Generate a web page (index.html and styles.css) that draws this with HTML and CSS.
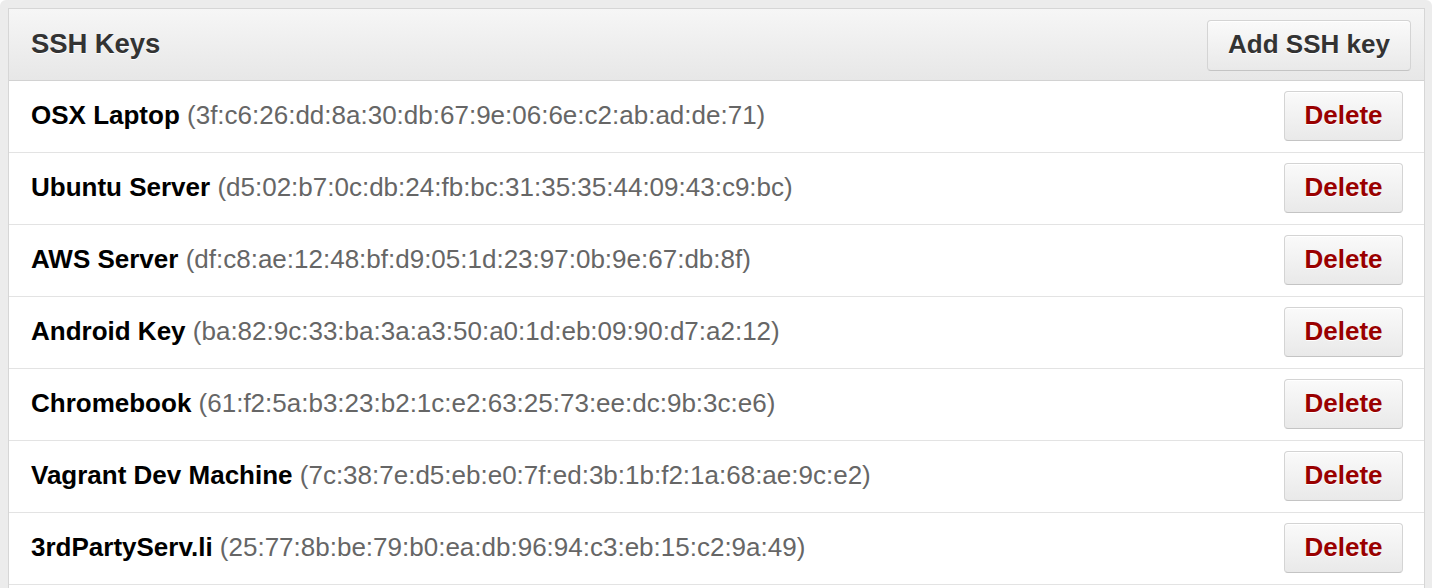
FILE: index.html
```html
<!DOCTYPE html>
<html>
<head>
<meta charset="utf-8">
<link rel="stylesheet" href="styles.css">
</head>
<body>
<div class="frame">
  <div class="box">
    <div class="box-header">
      <h3 class="title">SSH Keys</h3>
      <button class="btn btn-add">Add SSH key</button>
    </div>
    <ul class="keys">
      <li class="key"><span class="key-info"><strong class="key-name">OSX Laptop</strong> <span class="fp">(3f:c6:26:dd:8a:30:db:67:9e:06:6e:c2:ab:ad:de:71)</span></span><button class="btn btn-danger">Delete</button></li>
      <li class="key"><span class="key-info"><strong class="key-name">Ubuntu Server</strong> <span class="fp">(d5:02:b7:0c:db:24:fb:bc:31:35:35:44:09:43:c9:bc)</span></span><button class="btn btn-danger">Delete</button></li>
      <li class="key"><span class="key-info"><strong class="key-name">AWS Server</strong> <span class="fp">(df:c8:ae:12:48:bf:d9:05:1d:23:97:0b:9e:67:db:8f)</span></span><button class="btn btn-danger">Delete</button></li>
      <li class="key"><span class="key-info"><strong class="key-name">Android Key</strong> <span class="fp">(ba:82:9c:33:ba:3a:a3:50:a0:1d:eb:09:90:d7:a2:12)</span></span><button class="btn btn-danger">Delete</button></li>
      <li class="key"><span class="key-info"><strong class="key-name">Chromebook</strong> <span class="fp">(61:f2:5a:b3:23:b2:1c:e2:63:25:73:ee:dc:9b:3c:e6)</span></span><button class="btn btn-danger">Delete</button></li>
      <li class="key"><span class="key-info"><strong class="key-name">Vagrant Dev Machine</strong> <span class="fp">(7c:38:7e:d5:eb:e0:7f:ed:3b:1b:f2:1a:68:ae:9c:e2)</span></span><button class="btn btn-danger">Delete</button></li>
      <li class="key"><span class="key-info"><strong class="key-name">3rdPartyServ.li</strong> <span class="fp">(25:77:8b:be:79:b0:ea:db:96:94:c3:eb:15:c2:9a:49)</span></span><button class="btn btn-danger">Delete</button></li>
    </ul>
  </div>
</div>
</body>
</html>
```
FILE: styles.css
```css
html, body {
  margin: 0;
  padding: 0;
  background: #fff;
}
body {
  font-family: "Liberation Sans", Arial, Helvetica, sans-serif;
  overflow: hidden;
}
.frame {
  width: 1417px;
  padding: 8px 7px 8px 8px;
  background: #ececec;
  border-radius: 6px;
}
.box {
  background: #fff;
  border: 1px solid #d6d6d6;
}
.box-header {
  height: 71px;
  display: flex;
  align-items: center;
  justify-content: space-between;
  padding: 0 13px 0 22px;
  background: linear-gradient(#f6f6f6, #e7e7e7);
  border-bottom: 1px solid #d2d2d2;
}
.title {
  margin: 0;
  font-size: 27.5px;
  font-weight: bold;
  color: #333;
  text-shadow: 0 1px 0 #fff;
  letter-spacing: -0.1px;
  margin-top: -2px;
}
.keys {
  list-style: none;
  margin: 0;
  padding: 0 0 40px;
}
.key {
  height: 71px;
  display: flex;
  align-items: center;
  justify-content: space-between;
  padding: 0 21px 0 22px;
  border-bottom: 1px solid #e3e3e3;
}
.key-info {
  font-size: 26px;
  white-space: nowrap;
  margin-top: -2px;
}
.key-name {
  color: #000;
  font-weight: bold;
}
.fp {
  color: #666;
}
.btn {
  font-family: "Liberation Sans", Arial, Helvetica, sans-serif;
  font-size: 26px;
  font-weight: bold;
  border: 1px solid #d4d4d4;
  border-bottom-color: #c4c4c4;
  border-radius: 4px;
  background: linear-gradient(#fafafa, #e9e9e9);
  text-shadow: 0 1px 0 #fff;
  box-shadow: inset 0 1px 0 #fff;
  cursor: pointer;
}
.btn-add {
  width: 204px;
  height: 51px;
  margin-top: 1px;
  color: #333;
  padding: 0 0 2px;
}
.btn-danger {
  width: 119px;
  height: 50px;
  margin-top: -1px;
  color: #990000;
  padding: 0 0 2px;
}
```
